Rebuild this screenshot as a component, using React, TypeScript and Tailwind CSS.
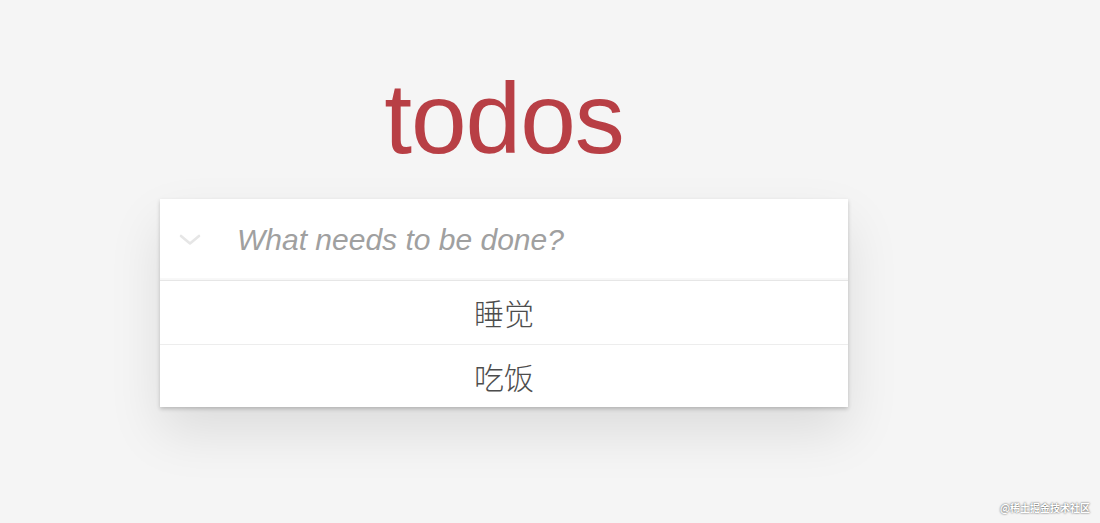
import React from 'react';

const todos = ['睡觉', '吃饭'];

const App: React.FC = () => {
  return (
    <div className="min-h-[523px] bg-[#f5f5f5] font-['Liberation_Sans','Noto_Sans_CJK_SC',sans-serif] relative">
      <div className="ml-[160px] w-[688px] pt-[68px]">
        {/* Title */}
        <h1 className="text-center text-[100px] leading-[100px] font-normal text-[#b83f45] tracking-[-1px]">
          todos
        </h1>

        {/* Card */}
        <section className="mt-[31px] bg-white shadow-[0_2px_4px_0_rgba(0,0,0,0.2),0_25px_50px_0_rgba(0,0,0,0.1)]">
          <header className="flex items-center h-[82px] shadow-[inset_0_-2px_1px_rgba(0,0,0,0.03)] border-b border-[#e6e6e6]">
            <div className="w-[60px] flex justify-center">
              <svg width="22" height="12" viewBox="0 0 22 12" fill="none">
                <path d="M2 2 L11 9.5 L20 2" stroke="#e6e6e6" strokeWidth="2.6" strokeLinecap="round" strokeLinejoin="round" />
              </svg>
            </div>
            <span className="pl-[17px] text-[30px] italic text-[#a0a0a0] font-light">What needs to be done?</span>
          </header>
          <ul>
            {todos.map((t, i) => (
              <li
                key={t}
                className={`h-[63px] flex items-center justify-center text-[30px] text-[#4d4d4d] font-['Noto_Sans_CJK_SC',sans-serif] font-light ${i > 0 ? 'border-t border-[#ededed]' : ''}`}
              >
                {t}
              </li>
            ))}
          </ul>
        </section>
      </div>

      {/* watermark */}
      <div className="absolute right-[10px] bottom-[9px] text-[10px] leading-[12px] text-white [text-shadow:0_0_2px_#333] font-['Noto_Sans_CJK_SC',sans-serif] font-bold">
        @稀土掘金技术社区
      </div>
    </div>
  );
};

export default App;
